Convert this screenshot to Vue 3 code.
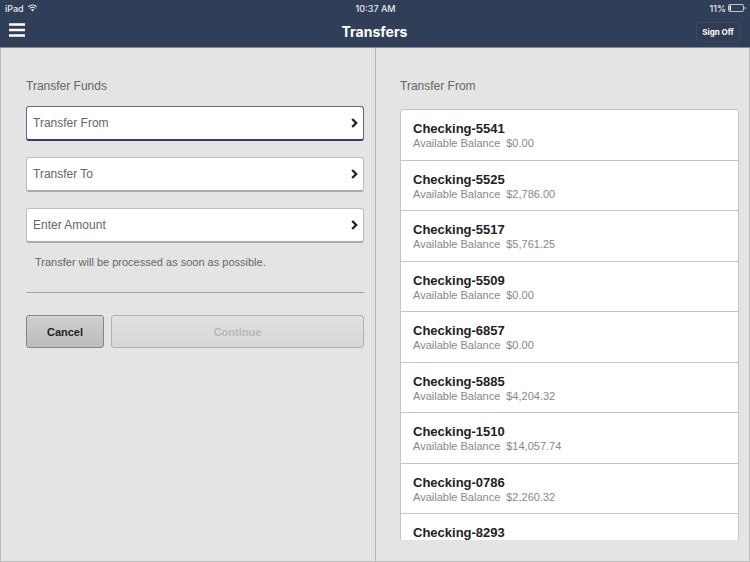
<script setup>
import { ref } from 'vue'

const fields = ['Transfer From', 'Transfer To', 'Enter Amount']
const active = ref(0)

const accounts = [
  { name: 'Checking-5541', balance: '$0.00' },
  { name: 'Checking-5525', balance: '$2,786.00' },
  { name: 'Checking-5517', balance: '$5,761.25' },
  { name: 'Checking-5509', balance: '$0.00' },
  { name: 'Checking-6857', balance: '$0.00' },
  { name: 'Checking-5885', balance: '$4,204.32' },
  { name: 'Checking-1510', balance: '$14,057.74' },
  { name: 'Checking-0786', balance: '$2,260.32' },
  { name: 'Checking-8293' },
]
</script>

<template>
  <div class="app">
    <header class="header">
      <div class="status">
        <span class="device">
          iPad
          <svg class="wifi" viewBox="2 1 16 13" aria-hidden="true">
            <path d="M2 5.4a11.5 11.5 0 0 1 16 0M4.9 8.4a7.3 7.3 0 0 1 10.2 0" fill="none" stroke="#e8ebf1" stroke-width="1.8" />
            <path d="M7.2 10.6a4 4 0 0 1 5.6 0L10 13.6z" fill="#e8ebf1" />
          </svg>
        </span>
        <span class="time">10:37 AM</span>
        <span class="power">
          11%
          <svg class="battery" viewBox="0 0 18 8" aria-hidden="true">
            <rect x="0.5" y="0.5" width="15" height="7" rx="1.5" fill="none" stroke="#c3c9d4" />
            <rect x="1.5" y="1.5" width="1.5" height="5" fill="#fff" />
            <path d="M16.6 2.6q1.2.4 1.2 1.4t-1.2 1.4z" fill="#c3c9d4" />
          </svg>
        </span>
      </div>
      <div class="navbar">
        <button class="menu" type="button" aria-label="Menu">
          <svg viewBox="0 0 16 14" aria-hidden="true">
            <path d="M0 1.5h16M0 7h16M0 12.5h16" stroke="#fff" stroke-width="2.6" />
          </svg>
        </button>
        <h1>Transfers</h1>
        <button class="signoff" type="button">Sign Off</button>
      </div>
    </header>

    <main class="panels">
      <section class="panel">
        <h2>Transfer Funds</h2>
        <div class="fields">
          <button
            v-for="(label, i) in fields"
            :key="label"
            type="button"
            class="field"
            :class="{ active: active === i }"
            @click="active = i"
          >
            {{ label }}
            <svg viewBox="0 0 7 10" aria-hidden="true">
              <path d="M1.2 1l4 4-4 4" fill="none" stroke="#222" stroke-width="2.4" />
            </svg>
          </button>
        </div>
        <p class="note">Transfer will be processed as soon as possible.</p>
        <hr />
        <div class="actions">
          <button class="btn cancel" type="button">Cancel</button>
          <button class="btn continue" type="button" disabled>Continue</button>
        </div>
      </section>

      <section class="panel side">
        <h2>Transfer From</h2>
        <ul class="accounts">
          <li v-for="a in accounts" :key="a.name">
            <button type="button" class="account">
              <strong>{{ a.name }}</strong>
              <span v-if="a.balance" class="balance"><span>Available Balance</span><span>{{ a.balance }}</span></span>
            </button>
          </li>
        </ul>
      </section>
    </main>
  </div>
</template>

<style>
body {
  background: #e4e4e4;
}
</style>

<style scoped>
* {
  box-sizing: border-box;
}
.app {
  display: flex;
  flex-direction: column;
  height: 100vh;
  font-family: "Liberation Sans", Arial, sans-serif;
  color: #666;
}
button {
  font-family: inherit;
  color: inherit;
  margin: 0;
}
svg {
  display: block;
}
.header {
  flex: none;
  background: #313e57;
  border-bottom: 1px solid #85899a;
  color: #fff;
  font-family: Inter, "Liberation Sans", sans-serif;
}
.status,
.navbar {
  display: grid;
  grid-template-columns: 1fr auto 1fr;
  align-items: center;
}
.status {
  height: 16px;
  padding: 0 4px 0 5px;
  font-size: 9px;
  font-weight: 500;
  color: #e8ebf1;
}
.device,
.power {
  display: flex;
  align-items: center;
  gap: 4px;
}
.power {
  gap: 2px;
  justify-content: flex-end;
}
.wifi {
  width: 9px;
  height: 8px;
}
.battery {
  width: 18px;
  height: 8px;
}
.navbar {
  height: 31px;
  padding: 0 10px 0 9px;
}
.menu {
  width: 16px;
  padding: 0;
  border: 0;
  background: none;
  margin-bottom: 3px;
}
h1 {
  margin: 0;
  font-size: 14px;
  line-height: 20px;
  font-weight: 700;
}
.signoff {
  justify-self: end;
  width: 44px;
  height: 20px;
  padding: 0;
  border: 1px solid #3b4861;
  border-radius: 3px;
  background: #303c54;
  color: #fff;
  font-size: 8px;
  font-weight: 700;
}
.panels {
  flex: 1;
  min-height: 0;
  display: grid;
  grid-template-columns: 1fr 1fr;
  border: solid #bbb;
  border-width: 0 1px 1px;
}
.panel {
  display: flex;
  flex-direction: column;
  min-height: 0;
  padding: 30px 11px 21px 25px;
}
.side {
  padding-left: 24px;
  padding-right: 10px;
  border-left: 1px solid #b5b5b5;
}
h2 {
  margin: 0;
  font-size: 12px;
  line-height: 16px;
  font-weight: 400;
}
.fields {
  display: flex;
  flex-direction: column;
  gap: 16px;
  margin-top: 12px;
}
.field {
  display: flex;
  align-items: center;
  justify-content: space-between;
  height: 35px;
  padding: 0 5px 0 6px;
  border: 1px solid #bdbdbd;
  border-bottom: 2px solid #aaa;
  border-radius: 3px;
  background: #fff;
  font-size: 12px;
  text-align: left;
}
.field svg {
  width: 7px;
  height: 10px;
}
.field.active {
  border-color: #5d6b88;
  border-bottom-color: #303e60;
}
.note {
  margin: 11px 9px 0;
  font-size: 11px;
  line-height: 16px;
}
hr {
  width: 100%;
  margin: 22px 0;
  border: 0;
  border-top: 1px solid #a6a6a6;
}
.actions {
  display: flex;
  gap: 7px;
}
.btn {
  height: 33px;
  border: 1px solid #848484;
  border-radius: 3px;
  font-size: 11px;
  font-weight: 700;
}
.cancel {
  width: 78px;
  background: linear-gradient(#cfcfcf, #bcbcbc);
  box-shadow: inset 0 1px #dadada;
  color: #222;
}
.continue {
  flex: 1;
  border-color: #b0b0b0;
  background: linear-gradient(#e2e2e2, #d6d6d6);
  color: #b8b8b8;
}
.accounts {
  flex: 1;
  min-height: 0;
  overflow: hidden;
  margin: 15px 0 0;
  padding: 0;
  border: solid #c4c4c4;
  border-width: 1px 1px 0;
  border-radius: 4px 4px 0 0;
  background: #fff;
  list-style: none;
}
.account {
  display: flex;
  flex-direction: column;
  width: 100%;
  height: 51px;
  padding: 12px 12px 0;
  border: 0;
  border-bottom: 1px solid #c4c4c4;
  background: #fff;
  text-align: left;
}
li:nth-child(even) .account {
  height: 50px;
}
.account strong {
  font-size: 13px;
  line-height: 14px;
  color: #222;
}
.balance {
  display: flex;
  gap: 6px;
  font-size: 11px;
  line-height: 14px;
  color: #888;
}
</style>
